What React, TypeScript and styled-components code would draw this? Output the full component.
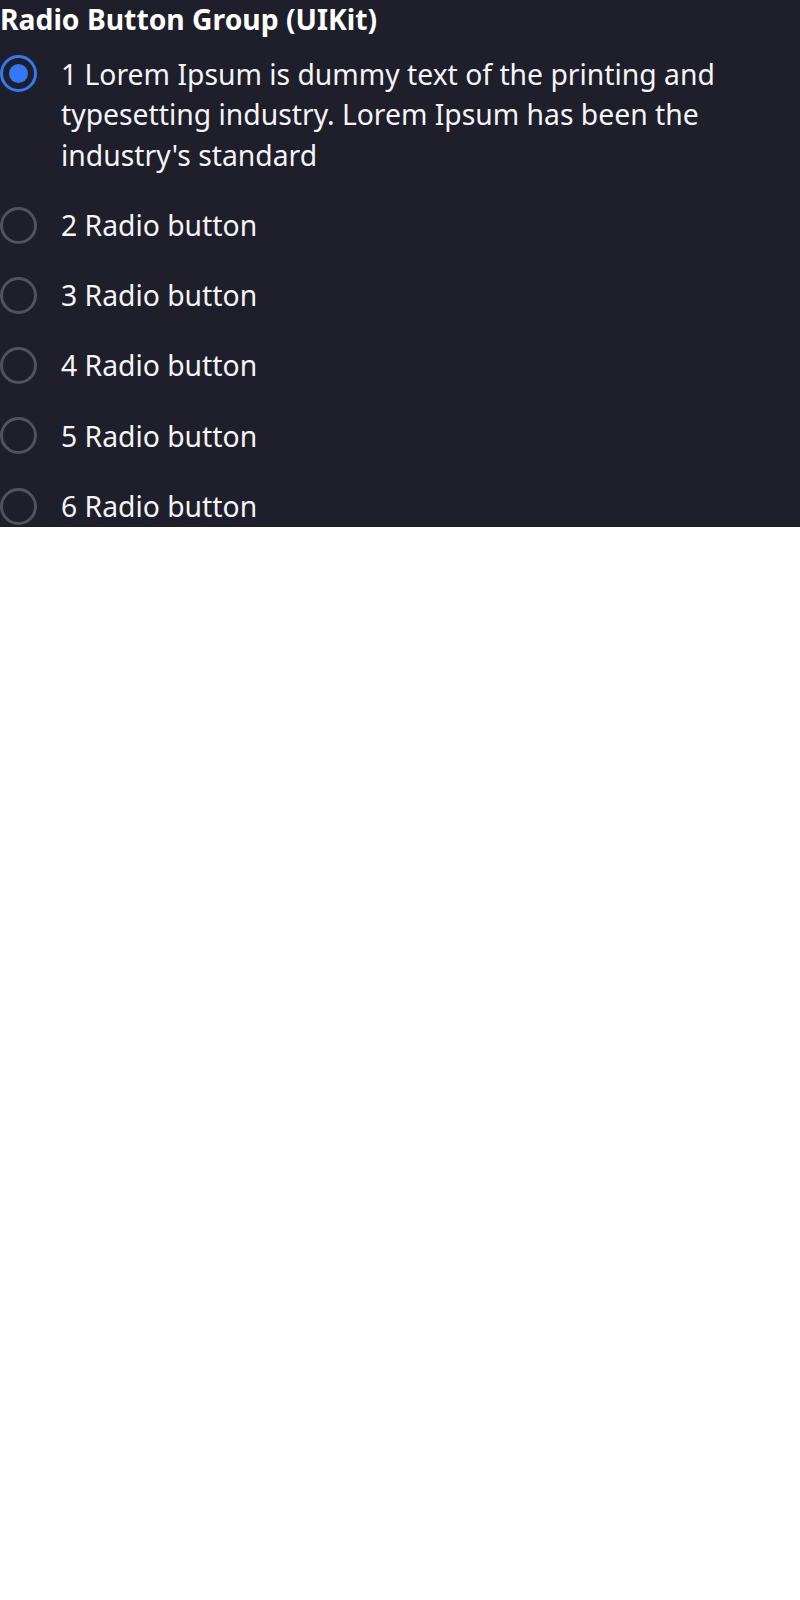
import React, { useState } from "react"
import styled, { createGlobalStyle } from "styled-components"

const GlobalStyle = createGlobalStyle`
  body {
    margin: 0;
    background: #ffffff;
    font-family: "Noto Sans", "Open Sans", sans-serif;
  }
`

const Panel = styled.section`
  background: #1e1f2b;
  color: #f4f4f6;
  width: 100%;
  padding-bottom: 1px;
`

const Title = styled.h2`
  margin: 0;
  padding: 2px 0 17px;
  font-size: 28.3px;
  line-height: 34.6px;
  font-weight: 700;
  color: #ffffff;
`

const Group = styled.div`
  display: flex;
  flex-direction: column;
  gap: 29.3px;
`

const Option = styled.label`
  display: flex;
  align-items: flex-start;
  gap: 24px;
  cursor: pointer;
  font-size: 28.3px;
  line-height: 40.8px;
`

const HiddenInput = styled.input`
  position: absolute;
  opacity: 0;
  width: 0;
  height: 0;
  margin: 0;
`

const Circle = styled.span<{ $checked: boolean }>`
  flex: none;
  box-sizing: border-box;
  width: 37px;
  height: 37px;
  margin-top: 1.9px;
  border-radius: 50%;
  border: 3.4px solid ${p => (p.$checked ? "#3478f6" : "#50525c")};
  display: flex;
  align-items: center;
  justify-content: center;

  &::after {
    content: "";
    width: 19px;
    height: 19px;
    border-radius: 50%;
    background: #3478f6;
    display: ${p => (p.$checked ? "block" : "none")};
  }
`

const OptionText = styled.span`
  flex: 1;
  padding-right: 4px;
`

const options = [
  "1 Lorem Ipsum is dummy text of the printing and typesetting industry. Lorem Ipsum has been the industry's standard",
  "2 Radio button",
  "3 Radio button",
  "4 Radio button",
  "5 Radio button",
  "6 Radio button",
]

export default function App() {
  const [selected, setSelected] = useState(0)
  return (
    <>
      <GlobalStyle />
      <Panel>
        <Title>Radio Button Group (UIKit)</Title>
        <Group role="radiogroup">
          {options.map((text, i) => (
            <Option key={i}>
              <HiddenInput
                type="radio"
                name="uikit-radio"
                checked={selected === i}
                onChange={() => setSelected(i)}
              />
              <Circle $checked={selected === i} />
              <OptionText>{text}</OptionText>
            </Option>
          ))}
        </Group>
      </Panel>
    </>
  )
}
